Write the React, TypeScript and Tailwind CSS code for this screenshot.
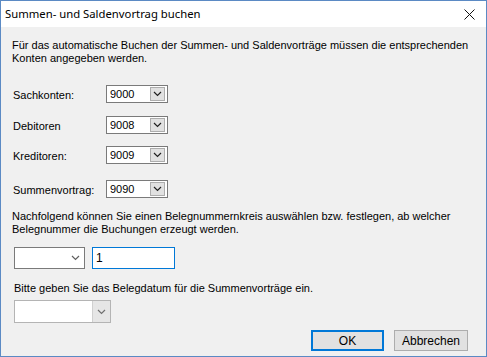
import React from "react"

function Chevron({ className = "" }: { className?: string }) {
  return (
    <svg width="9" height="6" viewBox="0 0 9 6" className={className}>
      <polyline points="1,1 4.5,4.5 8,1" fill="none" stroke="currentColor" strokeWidth="1.2" />
    </svg>
  )
}

function ClassicCombo({ value }: { value: string }) {
  return (
    <div className="w-[62px] h-[18px] border border-[#7a7a7a] bg-white flex items-center justify-between pl-[3px] pr-[2px]">
      <span className="leading-none">{value}</span>
      <div className="w-[15px] h-[14px] border border-[#adadad] bg-[#e1e1e1] flex items-center justify-center text-[#202020]">
        <Chevron />
      </div>
    </div>
  )
}

const accounts = [
  { label: "Sachkonten:", value: "9000", mt: "mt-[20px]" },
  { label: "Debitoren", value: "9008", mt: "mt-[13px]" },
  { label: "Kreditoren:", value: "9009", mt: "mt-[12px]" },
  { label: "Summenvortrag:", value: "9090", mt: "mt-[16px]" },
]

export default function App() {
  return (
    <div className="w-[487px] h-[357px] border border-[#5b8ac4] bg-[#f0f0f0] flex flex-col text-[11px] text-black font-['Liberation_Sans',Arial,sans-serif]">
      {/* title bar */}
      <div className="h-[26px] bg-white flex items-center justify-between pl-[4px] pr-[11px] shrink-0">
        <span className="text-[11.3px] font-['Noto_Sans',sans-serif] text-black">Summen- und Saldenvortrag buchen</span>
        <svg width="11" height="11" viewBox="0 0 11 11">
          <path d="M0.5 0.5 L10.5 10.5 M10.5 0.5 L0.5 10.5" stroke="#111" strokeWidth="1" />
        </svg>
      </div>

      <div className="flex-1 flex flex-col px-[11px] pt-[12px] pb-[5px] leading-[13px]">
        <p>
          Für das automatische Buchen der Summen- und Saldenvorträge müssen die entsprechenden
          <br />
          Konten angegeben werden.
        </p>

        {accounts.map((a) => (
          <div key={a.label} className={`flex items-center ${a.mt}`}>
            <span className="w-[94px] pl-[1px] pt-[2px]">{a.label}</span>
            <ClassicCombo value={a.value} />
          </div>
        ))}

        <p className="mt-[12px]">
          Nachfolgend können Sie einen Belegnummernkreis auswählen bzw. festlegen, ab welcher
          <br />
          Belegnummer die Buchungen erzeugt werden.
        </p>

        <div className="flex items-center gap-[7px] mt-[11px] ml-[2px]">
          <div className="w-[71px] h-[22px] border border-[#7a7a7a] bg-white flex items-center justify-end pr-[4px] text-[#606060]">
            <Chevron />
          </div>
          <div className="w-[83px] h-[22px] border border-[#0078d7] bg-white flex items-center pl-[3px] text-[12px]">
            1
          </div>
        </div>

        <p className="mt-[13px] ml-[2px]">Bitte geben Sie das Belegdatum für die Summenvorträge ein.</p>

        <div className="mt-[5px] ml-[2px] w-[97px] h-[23px] border border-[#b4b4b4] bg-white flex justify-end">
          <div className="w-[18px] h-full bg-[#e6e6e6] border-l border-[#d0d0d0] flex items-center justify-center text-[#707070]">
            <Chevron />
          </div>
        </div>

        <div className="mt-auto flex justify-end gap-[10px] pr-[7px]">
          <button className="w-[73px] h-[21px] bg-[#e1e1e1] border-2 border-[#0078d7] text-[12px] leading-none">OK</button>
          <button className="w-[74px] h-[21px] bg-[#e1e1e1] border border-[#adadad] text-[12px] leading-none">Abbrechen</button>
        </div>
      </div>
    </div>
  )
}
